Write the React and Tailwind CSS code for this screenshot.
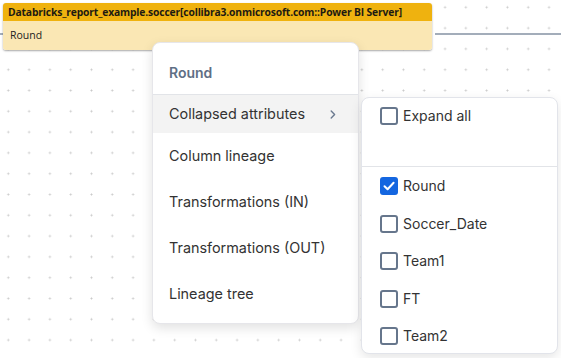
import React from "react";

function Box({ checked }) {
  if (checked) {
    return (
      <span className="flex h-[18px] w-[18px] shrink-0 items-center justify-center rounded-[3px] bg-[#1466e0]">
        <svg width="14" height="14" viewBox="0 0 14 14" fill="none">
          <path d="M2.5 7.2 L5.6 10.2 L11.6 3.8" stroke="white" strokeWidth="2" strokeLinecap="round" strokeLinejoin="round" />
        </svg>
      </span>
    );
  }
  return <span className="h-[18px] w-[18px] shrink-0 rounded-[3px] border-2 border-[#66768c] bg-white" />;
}

function CheckRow({ label, checked }) {
  return (
    <div className="flex h-[18px] items-center gap-[5px]">
      <Box checked={checked} />
      <span className="text-[14px] leading-none text-[#333]">{label}</span>
    </div>
  );
}

export default function App() {
  const items = ["Column lineage", "Transformations (IN)", "Transformations (OUT)", "Lineage tree"];
  const attrs = ["Soccer_Date", "Team1", "FT", "Team2"];
  return (
    <div
      className="relative h-[358px] w-[561px] overflow-hidden bg-white bg-[radial-gradient(circle,#c9c9c9_0.8px,transparent_1.2px)] bg-[size:20.8px_20.8px] bg-[position:-2.1px_-3.1px] font-['Inter',sans-serif]"
    >
      {/* edge line */}
      <div className="absolute left-[435px] top-[33px] h-[1.5px] w-[130px] bg-[#a3adba]" />
      <div className="absolute left-0 top-[33px] h-[1.5px] w-[3px] bg-[#a3adba]" />

      {/* node */}
      <div className="absolute left-[3px] top-[3px] flex h-[47px] w-[429px] flex-col overflow-hidden rounded-[3px] shadow-[0_1px_2px_rgba(0,0,0,0.35)] font-['Open_Sans',sans-serif]">
        <div className="flex h-[18px] items-center whitespace-nowrap bg-[#efb20f] pl-[5px] text-[10.3px] font-bold leading-none tracking-[-0.15px] text-[#1d1a12]">
          Databricks_report_example.soccer[collibra3.onmicrosoft.com::Power BI Server]
        </div>
        <div className="flex flex-1 items-center bg-[#fae7b4] pl-[7px] text-[10.5px] leading-none text-[#222]">
          Round
        </div>
      </div>

      {/* context menu */}
      <div className="absolute left-[152px] top-[42px] flex h-[282px] w-[207px] flex-col rounded-[8px] border border-[#e6e6ea] bg-white shadow-[0_4px_12px_rgba(0,0,0,0.12)]">
        <div className="flex h-[52px] items-end border-b border-[#e2e4e8] pb-[11px] pl-[16px]">
          <span className="text-[14px] font-semibold leading-[20px] text-[#5f6f85]">Round</span>
        </div>
        <div className="flex h-[38px] items-center justify-between bg-[#f3f3f3] pl-[16px] pr-[22px]">
          <span className="text-[14.4px] leading-none text-[#333]">Collapsed attributes</span>
          <svg width="6" height="9" viewBox="0 0 6 9" fill="none">
            <path d="M1.2 1 L4.6 4.5 L1.2 8" stroke="#6b7a90" strokeWidth="1.4" strokeLinecap="round" strokeLinejoin="round" />
          </svg>
        </div>
        <div className="mt-[4px] flex flex-col gap-[8px]">
          {items.map((t) => (
            <div key={t} className="flex h-[38px] items-center pl-[16px] text-[14.4px] leading-none text-[#333]">
              {t}
            </div>
          ))}
        </div>
      </div>

      {/* submenu */}
      <div className="absolute left-[361px] top-[97px] flex h-[257px] w-[197px] flex-col rounded-[8px] border border-[#e2e4ea] bg-white shadow-[0_4px_12px_rgba(0,0,0,0.1)]">
        <div className="h-[69px] border-b border-[#e2e4e8] pl-[18px] pt-[9px]">
          <CheckRow label="Expand all" />
        </div>
        <div className="flex flex-col gap-[19.5px] pl-[18px] pt-[10px]">
          <CheckRow label="Round" checked />
          {attrs.map((a) => (
            <CheckRow key={a} label={a} />
          ))}
        </div>
      </div>
    </div>
  );
}
